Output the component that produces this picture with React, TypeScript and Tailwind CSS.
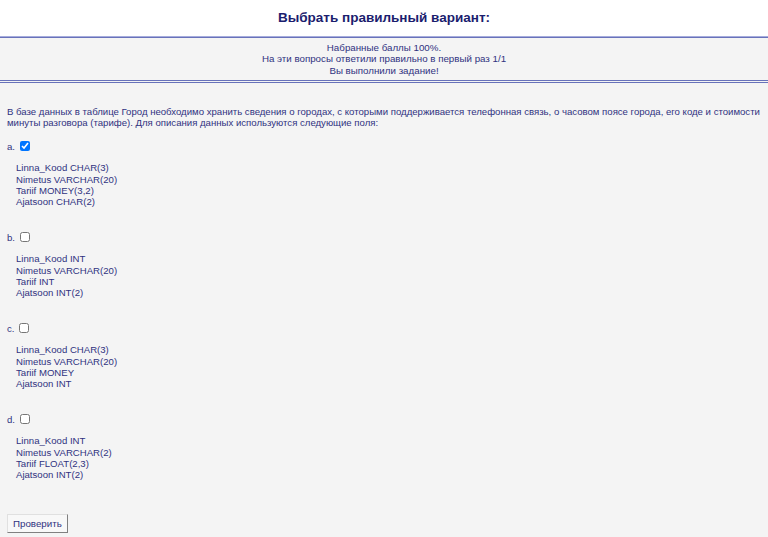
const options = [
  { key: "a", checked: true, lines: ["Linna_Kood CHAR(3)", "Nimetus VARCHAR(20)", "Tariif MONEY(3,2)", "Ajatsoon CHAR(2)"] },
  { key: "b", checked: false, lines: ["Linna_Kood INT", "Nimetus VARCHAR(20)", "Tariif INT", "Ajatsoon INT(2)"] },
  { key: "c", checked: false, lines: ["Linna_Kood CHAR(3)", "Nimetus VARCHAR(20)", "Tariif MONEY", "Ajatsoon INT"] },
  { key: "d", checked: false, lines: ["Linna_Kood INT", "Nimetus VARCHAR(2)", "Tariif FLOAT(2,3)", "Ajatsoon INT(2)"] },
];

export default function App() {
  return (
    <div className="min-h-[537px] bg-[#f4f4f4] font-['Liberation_Sans',Arial,sans-serif] text-[#30327f]">
      {/* Header */}
      <div className="bg-white h-[36px] flex items-center justify-center">
        <h1 className="text-[13.5px] font-bold text-[#1b1d6e] leading-none">Выбрать правильный вариант:</h1>
      </div>

      {/* Result panel */}
      <div className="border-t border-[#a6acdc]">
        <div className="border-t border-[#6872ba] border-b-[3px] border-b-[#6872ba] border-double pt-[4px] pb-[4px] text-center text-[9.75px] leading-[11.25px]">
          <div>Набранные баллы 100%.</div>
          <div>На эти вопросы ответили правильно в первый раз 1/1</div>
          <div>Вы выполнили задание!</div>
        </div>
      </div>

      {/* Question */}
      <div className="pl-[7px] pr-0 pt-[23px] text-[9.6px] leading-[11.25px]">
        <p>
          В базе данных в таблице Город необходимо хранить сведения о городах, с которыми поддерживается телефонная связь, о часовом поясе города, его коде и стоимости минуты разговора (тарифе). Для описания данных используются следующие поля:
        </p>

        <div className="mt-[11px]">
          {options.map((o) => (
            <div key={o.key} className="mb-[23px]">
              <div className="flex items-center h-[14px] gap-[4px]">
                <span>{o.key}.</span>
                <input
                  type="checkbox"
                  defaultChecked={o.checked}
                  className="w-[10px] h-[10px] m-0 ml-[1px] accent-[#0075ff]"
                />
              </div>
              <div className="pl-[9px] mt-[9px]">
                {o.lines.map((l) => (
                  <div key={l}>{l}</div>
                ))}
              </div>
            </div>
          ))}
        </div>

        <button className="mt-[11px] px-[5px] h-[19px] text-[9.75px] text-[#30327f] bg-[#f8f8f8] border border-t-[#e0e0e0] border-l-[#e0e0e0] border-r-[#808080] border-b-[#808080]">
          Проверить
        </button>
      </div>
    </div>
  );
}
